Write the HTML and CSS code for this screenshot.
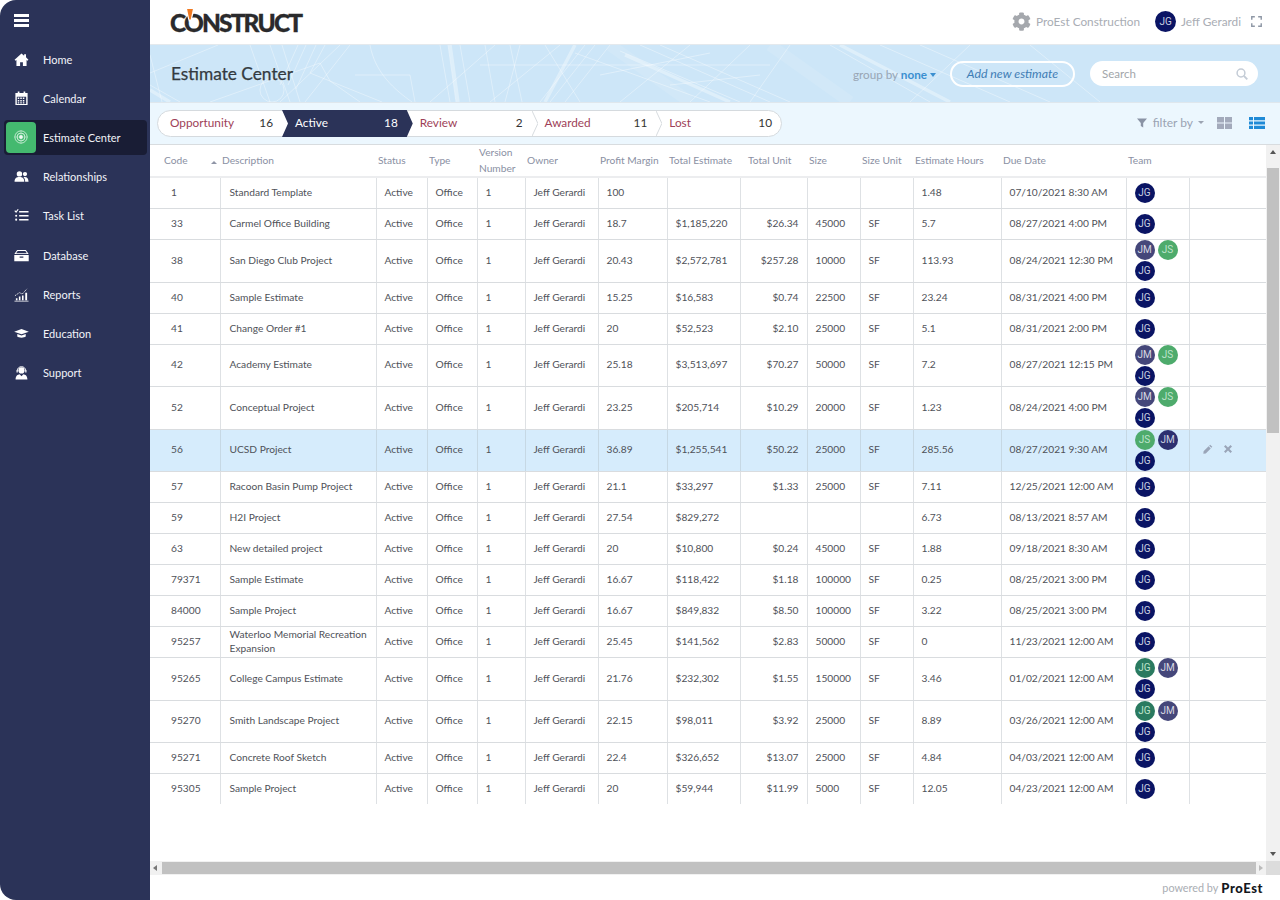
FILE: index.html
```html
<!DOCTYPE html>
<html lang="en">
<head>
<meta charset="utf-8">
<title>Estimate Center</title>
<link rel="stylesheet" href="styles.css">
</head>
<body>
<div class="app">
  <aside class="sidebar">
    <button class="burger" aria-label="Menu"><span></span><span></span><span></span></button>
    <nav class="nav">
      <a class="nav-item"><span class="nav-icon"><svg viewBox="0 0 16 16"><path d="M8 1.5 0.6 8.2l1 1.1 1-.9V15h3.9v-4.2h3V15h3.900V8.400l1 .9 1-1.100L12.800 5.700V2.300h-2v1.600z"/></svg></span>Home</a>
      <a class="nav-item"><span class="nav-icon"><svg viewBox="0 0 16 16"><path fill-rule="evenodd" d="M4 0.500h1.800V2h4.400V.5H12V2h2.500v13h-13V2H4zM3 6v7.800h10V6zm1 1h1.600v1.500H4zm2.700 0h1.600v1.500H6.700zm2.700 0H11v1.500H9.400zM4 9.600h1.600v1.500H4zm2.700 0h1.600v1.500H6.700zm2.700 0H11v1.500H9.400zM4 12h1.600v1.300H4zm2.700 0h1.600v1.300H6.700zm2.700 0H11v1.300H9.400z"/></svg></span>Calendar</a>
      <a class="nav-item nav-active"><span class="nav-icon nav-icon-active"><svg viewBox="0 0 16 16"><circle cx="8" cy="8" r="7" fill="none" stroke="#fff" stroke-opacity=".75" stroke-width="1"/><circle cx="8" cy="8" r="4.500" fill="none" stroke="#fff" stroke-opacity=".85" stroke-width="1"/><circle cx="8" cy="8" r="2.200"/><path d="M8 0v16M0 8h16" stroke="#fff" stroke-opacity=".5" stroke-width=".6"/></svg></span>Estimate Center</a>
      <a class="nav-item"><span class="nav-icon"><svg viewBox="0 0 16 16"><circle cx="5.800" cy="5.200" r="2.900"/><circle cx="11.700" cy="5.400" r="2.300"/><path d="M.6 13.500c0-3.600 2-5 5.200-5s5.200 1.400 5.200 5zM11.900 13.500c0-2.100-.6-3.600-1.800-4.700 3.600-.8 5.400 1.500 5.400 4.700z"/></svg></span>Relationships</a>
      <a class="nav-item"><span class="nav-icon"><svg viewBox="0 0 16 16"><path d="M5.500 3.200h10v1.700h-10zM5.500 7.400h10v1.700h-10zM5.500 11.600h10v1.700h-10z"/><path d="M.8 2.800 2.200 4.300 4.500 1.300" fill="none" stroke="#fff" stroke-width="1.200"/><circle cx="2.300" cy="8.200" r="1.100"/><circle cx="2.300" cy="12.400" r="1.100"/></svg></span>Task List</a>
      <a class="nav-item"><span class="nav-icon"><svg viewBox="0 0 16 16"><path fill-rule="evenodd" d="M3.400 2h9.200l3 4.500H.4zM.3 7.400h15.400V14H.3zM6 9v1.300h4V9z"/><path d="M3.900 3.200h8.200l1.600 2.300H2.300z" fill="#2b3358"/></svg></span>Database</a>
      <a class="nav-item"><span class="nav-icon"><svg viewBox="0 0 16 16"><path d="M.5 14.600h15v.8H.5zM2 12h1.700v2.200H2zM5.200 10h1.700v4.200H5.200zM8.500 9h1.700v5.200H8.500zM12 6h2v8.200h-2z"/><path d="M1 9.300 5.800 6l3 1.500L13.800 2" fill="none" stroke="#fff" stroke-width=".9" stroke-dasharray="1.500 .8"/></svg></span>Reports</a>
      <a class="nav-item"><span class="nav-icon"><svg viewBox="0 0 16 16"><path d="M8 3.200 15.800 6 8 8.900.2 6z"/><path d="M3.500 8.500 8 10.100l4.500-1.600v2.800C11 12.800 5 12.800 3.500 11.300z"/></svg></span>Education</a>
      <a class="nav-item"><span class="nav-icon"><svg viewBox="0 0 16 16"><circle cx="8" cy="5.800" r="3.300"/><path d="M3.400 6.500C3.400.2 12.600.2 12.600 6.500" fill="none" stroke="#fff" stroke-width="1"/><path d="M2.700 5.700h1.300v2.300H2.700zM12 5.700h1.300v2.300H12z"/><path d="M1.700 15.500c0-3.800 2.300-5.400 4.300-5.600L8 12l2-2.100c2 .2 4.300 1.800 4.300 5.600z"/></svg></span>Support</a>
    </nav>
  </aside>

  <main class="main">
    <header class="topbar">
      <div class="logo"><span class="logo-text">CONSTRUCT</span><svg class="logo-mark" viewBox="0 0 10 12"><path d="M1 0h8L6 11H4z" fill="#fff"/><path d="M2.500 0h5L5.600 9H4.400z" fill="#f07a22"/></svg></div>
      <div class="top-right">
        <span class="company"><svg class="gear" viewBox="0 0 512 512"><path d="M487 316l-42-24c4-23 4-47 0-70l42-24c5-3 7-9 6-14-11-36-30-68-55-95-4-4-10-5-15-2l-42 24c-18-15-39-27-61-35V28c0-6-4-10-9-11-37-8-75-8-110 0-5 1-9 5-9 11v48c-22 8-43 20-61 35L89 87c-5-3-11-2-15 2-25 27-44 59-55 95-2 5 1 11 6 14l42 24c-4 23-4 47 0 70l-42 24c-5 3-7 9-6 14 11 36 30 68 55 95 4 4 10 5 15 2l42-24c18 15 39 27 61 35v48c0 6 4 10 9 11 37 8 75 8 110 0 5-1 9-5 9-11v-48c22-8 43-20 61-35l42 24c5 3 11 2 15-2 25-27 44-59 55-95 2-5-1-11-6-14zM256 336c-44 0-80-36-80-80s36-80 80-80 80 36 80 80-36 80-80 80z"/></svg>ProEst Construction</span>
        <span class="user"><span class="av av-top">JG</span>Jeff Gerardi</span>
        <svg class="fs" viewBox="0 0 10 10"><path d="M.7 3.500V.7h2.800M6.500.7h2.800v2.800M9.300 6.500v2.800H6.500M3.500 9.300H.7V6.500" fill="none" stroke="#8f98a6" stroke-width="1.300"/></svg>
      </div>
    </header>

    <section class="hero">
      <svg class="blueprint" viewBox="0 0 1130 57" preserveAspectRatio="none" aria-hidden="true">
        <g fill="none" stroke="#fff" stroke-opacity=".36" stroke-width="1">
          <path d="M0 28 68 0M0 40 30 57M60 57 170 18 180 36 210 57M0 10 12 57"/>
          <path d="M100 0 120 57M120 0 140 57M132 0 150 57M190 0 130 57M200 0 155 57M160 28 232 57M175 0 160 28M148 0 130 40M156 0 138 40M166 0 146 44"/>
          <path d="M220 0C225 28 245 45 262 57M205 30 260 30 265 57M110 45a12 12 0 1 0 24 0a12 12 0 1 0-24 0"/>
          <path d="M290 0 300 57M310 0 320 57M345 0 280 57M410 0 340 57M425 8 560 57M330 20 620 20M370 0 355 57M395 0 430 57M360 0 372 57M298 0 306 57M335 0 345 57"/>
          <path d="M435 0 390 57M445 0 400 57M460 0 415 57M470 6 590 57M490 0 620 57M510 0 640 57M540 0 470 57M600 0 540 57M640 0 600 57M450 30 560 8M520 40 610 30"/>
          <path d="M680 0 780 57M730 0 860 57M770 0 900 57M820 0 760 57M880 0 950 57"/>
        </g>
        <g fill="none" stroke="#fff" stroke-opacity=".35" stroke-width="3.500">
          <path d="M300 0 308 57M425 0 395 57M475 10 580 57M690 0 800 57M20 57 0 45"/>
        </g>
        <g fill="none" stroke="#fff" stroke-opacity=".1" stroke-width="12">
          <path d="M460 0 540 57M620 0 700 57"/>
        </g>
      </svg>
      <h1 class="title">Estimate Center</h1>
      <div class="hero-tools">
        <span class="group-by">group by <b>none</b><i class="caret caret-blue"></i></span>
        <button class="add-btn">Add new estimate</button>
        <div class="search"><span>Search</span><svg viewBox="0 0 12 12"><circle cx="5" cy="5" r="3.900" fill="none" stroke="#c4ccd6" stroke-width="1.500"/><path d="M8 8l3.300 3.300" stroke="#c4ccd6" stroke-width="1.800"/></svg></div>
      </div>
    </section>

    <section class="tabs-band">
      <div class="pipeline">
        <div class="tab"><span>Opportunity</span><b>16</b></div>
        <div class="tab tab-active"><span>Active</span><b>18</b></div>
        <div class="tab tab-sep"><span>Review</span><b>2</b><svg viewBox="0 0 6 26"><path d="M0 0 6 13 0 26" fill="none" stroke="#d5dade"/></svg></div>
        <div class="tab tab-sep"><span>Awarded</span><b>11</b><svg viewBox="0 0 6 26"><path d="M0 0 6 13 0 26" fill="none" stroke="#d5dade"/></svg></div>
        <div class="tab"><span>Lost</span><b>10</b></div>
      </div>
      <div class="view-tools">
        <svg class="funnel" viewBox="0 0 10 10"><path d="M0 .5h10L6.200 5v4.500L3.800 8V5z"/></svg>
        <span class="filter">filter by</span><i class="caret caret-grey"></i>
        <svg class="view-ic" viewBox="0 0 15 12"><path fill="#a3aabb" d="M0 0h7v5.500H0zM8 0h7v5.500H8zM0 6.500h7V12H0zM8 6.500h7V12H8z"/></svg>
        <svg class="view-ic view-list" viewBox="0 0 16 12"><path fill="#1f8ad6" d="M0 0h4v3.200H0zM5 0h11v3.200H5zM0 4.400h4v3.200H0zM5 4.400h11v3.200H5zM0 8.800h4V12H0zM5 8.800h11V12H5z"/></svg>
      </div>
    </section>

    <section class="grid-wrap">
      <div class="grid-area">
        <table class="grid">
          <colgroup>
            <col class="c1"><col class="c2"><col class="c3"><col class="c4"><col class="c5"><col class="c6"><col class="c7"><col class="c8"><col class="c9"><col class="c10"><col class="c11"><col class="c12"><col class="c13"><col class="c14"><col class="c15">
          </colgroup>
          <thead>
            <tr>
              <th class="th-code">Code</th>
              <th class="th-desc"><i class="sort"></i>Description</th>
              <th>Status</th><th>Type</th><th><span class="ver">Version Number</span></th><th>Owner</th><th>Profit Margin</th><th>Total Estimate</th><th class="th-unit">Total Unit</th><th>Size</th><th>Size Unit</th><th>Estimate Hours</th><th>Due Date</th><th>Team</th><th></th>
            </tr>
          </thead>
          <tbody>
            <tr><td class="code">1</td><td>Standard Template</td><td>Active</td><td>Office</td><td>1</td><td>Jeff Gerardi</td><td>100</td><td></td><td class="num"></td><td></td><td></td><td>1.48</td><td>07/10/2021 8:30 AM</td><td class="tc"><div class="team"><span class="av jg">JG</span></div></td><td></td></tr>
            <tr><td class="code">33</td><td>Carmel Office Building</td><td>Active</td><td>Office</td><td>1</td><td>Jeff Gerardi</td><td>18.7</td><td>$1,185,220</td><td class="num">$26.34</td><td>45000</td><td>SF</td><td>5.7</td><td>08/27/2021 4:00 PM</td><td class="tc"><div class="team"><span class="av jg">JG</span></div></td><td></td></tr>
            <tr class="tall"><td class="code">38</td><td>San Diego Club Project</td><td>Active</td><td>Office</td><td>1</td><td>Jeff Gerardi</td><td>20.43</td><td>$2,572,781</td><td class="num">$257.28</td><td>10000</td><td>SF</td><td>113.93</td><td>08/24/2021 12:30 PM</td><td class="tc"><div class="team"><span class="av jm">JM</span><span class="av js">JS</span><span class="av jg">JG</span></div></td><td></td></tr>
            <tr><td class="code">40</td><td>Sample Estimate</td><td>Active</td><td>Office</td><td>1</td><td>Jeff Gerardi</td><td>15.25</td><td>$16,583</td><td class="num">$0.74</td><td>22500</td><td>SF</td><td>23.24</td><td>08/31/2021 4:00 PM</td><td class="tc"><div class="team"><span class="av jg">JG</span></div></td><td></td></tr>
            <tr><td class="code">41</td><td>Change Order #1</td><td>Active</td><td>Office</td><td>1</td><td>Jeff Gerardi</td><td>20</td><td>$52,523</td><td class="num">$2.10</td><td>25000</td><td>SF</td><td>5.1</td><td>08/31/2021 2:00 PM</td><td class="tc"><div class="team"><span class="av jg">JG</span></div></td><td></td></tr>
            <tr class="tall2"><td class="code">42</td><td>Academy Estimate</td><td>Active</td><td>Office</td><td>1</td><td>Jeff Gerardi</td><td>25.18</td><td>$3,513,697</td><td class="num">$70.27</td><td>50000</td><td>SF</td><td>7.2</td><td>08/27/2021 12:15 PM</td><td class="tc"><div class="team"><span class="av jm">JM</span><span class="av js">JS</span><span class="av jg">JG</span></div></td><td></td></tr>
            <tr class="tall"><td class="code">52</td><td>Conceptual Project</td><td>Active</td><td>Office</td><td>1</td><td>Jeff Gerardi</td><td>23.25</td><td>$205,714</td><td class="num">$10.29</td><td>20000</td><td>SF</td><td>1.23</td><td>08/24/2021 4:00 PM</td><td class="tc"><div class="team"><span class="av jm">JM</span><span class="av js">JS</span><span class="av jg">JG</span></div></td><td></td></tr>
            <tr class="tall2 selected"><td class="code">56</td><td>UCSD Project</td><td>Active</td><td>Office</td><td>1</td><td>Jeff Gerardi</td><td>36.89</td><td>$1,255,541</td><td class="num">$50.22</td><td>25000</td><td>SF</td><td>285.56</td><td>08/27/2021 9:30 AM</td><td class="tc"><div class="team"><span class="av js">JS</span><span class="av jm2">JM</span><span class="av jg">JG</span></div></td><td><div class="row-actions"><svg viewBox="0 0 12 12"><path fill="#9aa5b8" d="M8.600.8 11.200 3.400 10 4.600 7.400 2zM6.700 2.700 9.300 5.300 3.300 11.300 0.400 11.600 0.700 8.700z"/></svg><svg viewBox="0 0 12 12"><path fill="#9aa5b8" d="M1.200 3 3 1.200 6 4.200 9 1.200 10.800 3 7.800 6 10.800 9 9 10.800 6 7.800 3 10.800 1.200 9 4.200 6z"/></svg></div></td></tr>
            <tr><td class="code">57</td><td>Racoon Basin Pump Project</td><td>Active</td><td>Office</td><td>1</td><td>Jeff Gerardi</td><td>21.1</td><td>$33,297</td><td class="num">$1.33</td><td>25000</td><td>SF</td><td>7.11</td><td>12/25/2021 12:00 AM</td><td class="tc"><div class="team"><span class="av jg">JG</span></div></td><td></td></tr>
            <tr><td class="code">59</td><td>H2I Project</td><td>Active</td><td>Office</td><td>1</td><td>Jeff Gerardi</td><td>27.54</td><td>$829,272</td><td class="num"></td><td></td><td></td><td>6.73</td><td>08/13/2021 8:57 AM</td><td class="tc"><div class="team"><span class="av jg">JG</span></div></td><td></td></tr>
            <tr><td class="code">63</td><td>New detailed project</td><td>Active</td><td>Office</td><td>1</td><td>Jeff Gerardi</td><td>20</td><td>$10,800</td><td class="num">$0.24</td><td>45000</td><td>SF</td><td>1.88</td><td>09/18/2021 8:30 AM</td><td class="tc"><div class="team"><span class="av jg">JG</span></div></td><td></td></tr>
            <tr><td class="code">79371</td><td>Sample Estimate</td><td>Active</td><td>Office</td><td>1</td><td>Jeff Gerardi</td><td>16.67</td><td>$118,422</td><td class="num">$1.18</td><td>100000</td><td>SF</td><td>0.25</td><td>08/25/2021 3:00 PM</td><td class="tc"><div class="team"><span class="av jg">JG</span></div></td><td></td></tr>
            <tr><td class="code">84000</td><td>Sample Project</td><td>Active</td><td>Office</td><td>1</td><td>Jeff Gerardi</td><td>16.67</td><td>$849,832</td><td class="num">$8.50</td><td>100000</td><td>SF</td><td>3.22</td><td>08/25/2021 3:00 PM</td><td class="tc"><div class="team"><span class="av jg">JG</span></div></td><td></td></tr>
            <tr class="short"><td class="code">95257</td><td>Waterloo Memorial Recreation Expansion</td><td>Active</td><td>Office</td><td>1</td><td>Jeff Gerardi</td><td>25.45</td><td>$141,562</td><td class="num">$2.83</td><td>50000</td><td>SF</td><td>0</td><td>11/23/2021 12:00 AM</td><td class="tc"><div class="team"><span class="av jg">JG</span></div></td><td></td></tr>
            <tr class="tall"><td class="code">95265</td><td>College Campus Estimate</td><td>Active</td><td>Office</td><td>1</td><td>Jeff Gerardi</td><td>21.76</td><td>$232,302</td><td class="num">$1.55</td><td>150000</td><td>SF</td><td>3.46</td><td>01/02/2021 12:00 AM</td><td class="tc"><div class="team"><span class="av jt">JG</span><span class="av jm">JM</span><span class="av jg">JG</span></div></td><td></td></tr>
            <tr class="tall2"><td class="code">95270</td><td>Smith Landscape Project</td><td>Active</td><td>Office</td><td>1</td><td>Jeff Gerardi</td><td>22.15</td><td>$98,011</td><td class="num">$3.92</td><td>25000</td><td>SF</td><td>8.89</td><td>03/26/2021 12:00 AM</td><td class="tc"><div class="team"><span class="av jt">JG</span><span class="av jm">JM</span><span class="av jg">JG</span></div></td><td></td></tr>
            <tr><td class="code">95271</td><td>Concrete Roof Sketch</td><td>Active</td><td>Office</td><td>1</td><td>Jeff Gerardi</td><td>22.4</td><td>$326,652</td><td class="num">$13.07</td><td>25000</td><td>SF</td><td>4.84</td><td>04/03/2021 12:00 AM</td><td class="tc"><div class="team"><span class="av jg">JG</span></div></td><td></td></tr>
            <tr><td class="code">95305</td><td>Sample Project</td><td>Active</td><td>Office</td><td>1</td><td>Jeff Gerardi</td><td>20</td><td>$59,944</td><td class="num">$11.99</td><td>5000</td><td>SF</td><td>12.05</td><td>04/23/2021 12:00 AM</td><td class="tc"><div class="team"><span class="av jg">JG</span></div></td><td></td></tr>
          </tbody>
        </table>
      </div>
      <div class="vbar"><i class="arrow-up"></i><div class="vthumb"></div><i class="arrow-down"></i></div>
    </section>
    <div class="hbar"><i class="arrow-left"></i><div class="hthumb"></div><i class="arrow-right"></i><div class="corner"></div></div>
    <footer class="footer"><span>powered by</span><b>ProEst</b></footer>
  </main>
</div>
</body>
</html>
```

FILE: styles.css
```css
* { box-sizing: border-box; }
html, body { margin: 0; height: 100%; background: #fff; }
body { font-family: Lato, "Open Sans", sans-serif; overflow: hidden; }
.app { display: flex; width: 1280px; height: 900px; }

/* sidebar */
.sidebar { flex: 0 0 150px; background: #2b3358; border-radius: 16px 0 0 16px; }
.burger { display: flex; flex-direction: column; gap: 2.5px; width: 15px; margin: 14px 0 0 14px; padding: 0; border: 0; background: none; }
.burger span { display: block; height: 2.5px; background: #fff; }
.nav { display: flex; flex-direction: column; margin-top: 13px; }
.nav-item { display: flex; align-items: center; height: 39.2px; margin: 0 3px 0 4px; font-size: 11px; color: #f2f4f8; border-radius: 4px; }
.nav-icon { flex: 0 0 39px; display: flex; justify-content: center; padding-right: 4px; }
.nav-icon svg { width: 15px; height: 15px; fill: #fff; }
.nav-active { height: 35px; margin-top: 2.1px; margin-bottom: 2.1px; background: #191d35; }
.nav-icon-active { flex: 0 0 30px; height: 31px; margin: 0 7px 0 2px; padding: 0; align-items: center; background: #44b96f; border-radius: 4px; }
.nav-icon-active svg { width: 14px; height: 14px; fill: #e9f7ee; }

/* main */
.main { flex: 1; min-width: 0; display: flex; flex-direction: column; }
.topbar { flex: 0 0 44px; display: flex; align-items: center; justify-content: space-between; padding: 0 18px 0 20px; background: #fff; }
.logo { position: relative; line-height: 1; padding-top: 2px; }
.logo-text { font-size: 24.500px; font-weight: 900; color: #2a2a2c; letter-spacing: -1.850px; -webkit-text-stroke: .3px #2a2a2c; }
.logo-mark { position: absolute; left: 13.500px; top: 0; width: 12px; height: 14px; }
.top-right { display: flex; align-items: center; font-size: 11.800px; color: #a9adb4; padding-bottom: 2px; }
.company { display: flex; align-items: center; gap: 5px; }
.gear { width: 19px; height: 19px; fill: #a5a8ad; }
.user { display: flex; align-items: center; gap: 5px; margin-left: 15px; }
.fs { width: 11px; height: 11px; margin-left: 10px; }
.av { display: flex; align-items: center; justify-content: center; width: 20px; height: 20px; border-radius: 50%; font-size: 10px; font-family: Roboto, sans-serif; color: #c9cfe0; }
.av-top { width: 21px; height: 21px; background: #0a1464; }
.jg { background: #0a1464; }
.jm { background: #45477a; color: #d7d8e2; }
.jm2 { background: #2d3070; }
.js { background: #4eab6c; color: #bfe3cb; }
.jt { background: #2a7a60; color: #bfe3cb; }

.hero { position: relative; flex: 0 0 59px; display: flex; align-items: center; justify-content: space-between; padding: 0 22px 0 21px; background: #cde6f8; border-top: 1px solid #e4e9ed; border-bottom: 1px solid #dfe7ed; overflow: hidden; }
.blueprint { position: absolute; inset: 0; width: 100%; height: 100%; }
.title { position: relative; margin: 0; font-size: 17.300px; font-weight: 400; color: #333a40; -webkit-text-stroke: .25px #333a40; }
.hero-tools { position: relative; display: flex; align-items: center; }
.group-by { font-size: 11.700px; color: #98a5b4; }
.group-by b { color: #3b8fd0; }
.caret { display: inline-block; width: 0; height: 0; border-left: 3.500px solid transparent; border-right: 3.500px solid transparent; }
.caret-blue { border-top: 4px solid #3b8fd0; margin: 0 0 2px 3px; }
.caret-grey { border-top: 3.500px solid #9ca4b2; margin-left: 5px; }
.add-btn { width: 125px; height: 26px; margin-left: 14px; border: 2px solid #fff; border-radius: 13px; background: transparent; font-family: inherit; font-style: italic; font-size: 12.300px; color: #3f7db5; padding: 0; }
.search { display: flex; align-items: center; justify-content: space-between; width: 168px; height: 25px; margin-left: 15px; padding: 0 10px 0 12px; background: #fff; border-radius: 13px; font-size: 11.500px; color: #a2a6aa; }
.search svg { width: 12px; height: 12px; }

.tabs-band { flex: 0 0 42px; display: flex; align-items: center; justify-content: space-between; padding: 0 15px 0 7px; background: #ecf7fe; border-bottom: 1px solid #d8dcdf; }
.pipeline { display: flex; width: 625px; height: 27px; background: #fff; border: 1px solid #d5dade; border-radius: 14px; }
.tab { position: relative; flex: 1; display: flex; align-items: center; justify-content: space-between; padding: 0 9px 3px 13px; font-size: 11.800px; color: #9e3f58; }
.tab b { font-weight: 400; color: #333; }
.tab svg { position: absolute; right: -6px; top: 0; width: 6px; height: 100%; }
.tab:first-child { flex: 0 0 124px; padding-left: 12px; }
.tab-active { color: #fff; z-index: 1; padding-left: 13px; }
.tab-active::before { content: ""; position: absolute; inset: -1px -6px -1px 0; background: #2b3358; clip-path: polygon(0 0, calc(100% - 6px) 0, 100% 50%, calc(100% - 6px) 100%, 0 100%, 6px 50%); }
.tab-active span, .tab-active b { position: relative; color: #fff; }
.view-tools { display: flex; align-items: center; font-size: 12px; color: #9aa3b3; margin-bottom: 2px; }
.funnel { width: 10px; height: 10px; margin-right: 6px; fill: #8a93a5; }
.view-ic { width: 15px; height: 12px; margin-left: 13px; }
.view-list { width: 16px; margin-left: 17px; }

/* grid */
.grid-wrap { flex: 1; min-height: 0; display: flex; }
.grid-area { flex: 1; min-width: 0; overflow: hidden; }
.grid { width: 1116px; border-collapse: collapse; table-layout: fixed; font-size: 10.200px; color: #4f5259; }
.c1 { width: 70px; } .c2 { width: 156px; } .c3 { width: 51px; } .c4 { width: 50px; } .c5 { width: 48px; } .c6 { width: 73px; } .c7 { width: 69px; } .c8 { width: 73px; } .c9 { width: 67px; } .c10 { width: 53px; } .c11 { width: 53px; } .c12 { width: 88px; } .c13 { width: 125px; } .c14 { width: 63px; } .c15 { width: 77px; }
th { height: 32px; padding: 0 0 1px 2px; font-weight: 400; font-size: 10.200px; line-height: 16px; color: #8a90a3; text-align: left; border-bottom: 2px solid #ecedef; }
.ver { display: block; margin: -2px 0; }
.th-code { padding-left: 14px; }
.th-desc { position: relative; }
.th-unit { padding-left: 8px; }
.sort { position: absolute; left: -9px; top: 16px; width: 0; height: 0; border-left: 3px solid transparent; border-right: 3px solid transparent; border-bottom: 3.500px solid #8f95a6; }
tbody tr { height: 31px; }
tbody tr.short { height: 30px; }
tbody tr.tall { height: 43px; }
tbody tr.tall2 { height: 42px; }
td { padding: 0 4px 2px 8px; line-height: 14px; border-right: 1px solid #dee1e4; border-bottom: 1px solid #d9dcdf; }
td:last-child { border-right: 0; }
tbody tr:last-child td { border-bottom: 0; }
td:nth-child(2) { padding-left: 9px; }
td.code { padding-left: 21px; }
td.num { text-align: right; padding-right: 8px; }
td.tc { padding-bottom: 0; }
.selected td { background: #d6ecfc; border-right-color: #c6d8e4; }
.team { display: flex; flex-wrap: wrap; gap: 1px 3px; }
.row-actions { display: flex; gap: 10px; padding-left: 5px; }
.row-actions svg { width: 10px; height: 10px; }

/* fake scrollbars */
.vbar { flex: 0 0 14px; display: flex; flex-direction: column; align-items: center; padding-top: 5px; background: #f1f1f1; }
.vthumb { width: 12px; height: 265px; margin-top: 14px; background: #c1c1c1; }
.arrow-up { width: 0; height: 0; border: 3.500px solid transparent; border-top: 0; border-bottom: 4px solid #555; }
.arrow-down { width: 0; height: 0; margin-top: auto; margin-bottom: 5px; border: 3.500px solid transparent; border-bottom: 0; border-top: 4px solid #555; }
.hbar { flex: 0 0 14px; display: flex; align-items: center; padding-left: 3px; background: #f1f1f1; }
.hthumb { width: 1094px; height: 12px; margin-left: 5px; background: #c1c1c1; }
.arrow-left { width: 0; height: 0; border: 3.500px solid transparent; border-left: 0; border-right: 4px solid #777; }
.arrow-right { width: 0; height: 0; margin-left: 3px; border: 3.500px solid transparent; border-right: 0; border-left: 4px solid #bbb; }
.corner { width: 14px; height: 14px; margin-left: auto; background: #dcdcdc; }
.footer { flex: 0 0 25px; display: flex; align-items: center; justify-content: flex-end; gap: 3px; padding-right: 17px; font-size: 10.800px; color: #a9adb3; }
.footer b { font-size: 13px; font-weight: 900; color: #14171c; letter-spacing: .6px; }
```
